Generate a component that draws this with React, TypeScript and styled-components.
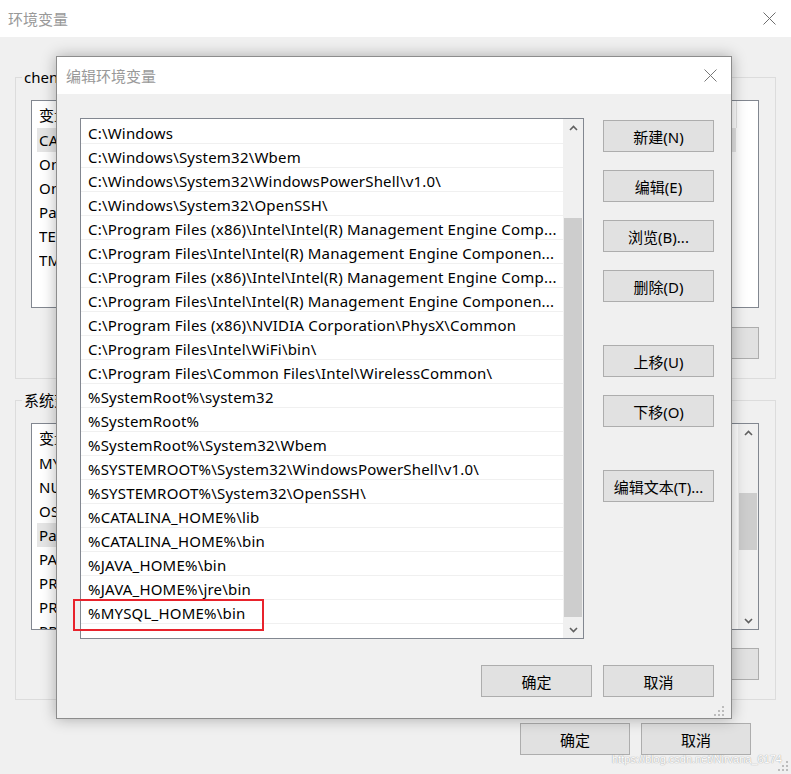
import React from "react";
import styled, { createGlobalStyle } from "styled-components";

const UI_FONT = `"Noto Sans", "Noto Sans CJK SC", sans-serif`;

const GlobalStyle = createGlobalStyle`
  html, body {
    margin: 0;
    padding: 0;
    background: #f0f0f0;
  }
  body {
    font-family: ${UI_FONT};
  }
`;

const pathEntries = [
  "C:\\Windows",
  "C:\\Windows\\System32\\Wbem",
  "C:\\Windows\\System32\\WindowsPowerShell\\v1.0\\",
  "C:\\Windows\\System32\\OpenSSH\\",
  "C:\\Program Files (x86)\\Intel\\Intel(R) Management Engine Comp...",
  "C:\\Program Files\\Intel\\Intel(R) Management Engine Componen...",
  "C:\\Program Files (x86)\\Intel\\Intel(R) Management Engine Comp...",
  "C:\\Program Files\\Intel\\Intel(R) Management Engine Componen...",
  "C:\\Program Files (x86)\\NVIDIA Corporation\\PhysX\\Common",
  "C:\\Program Files\\Intel\\WiFi\\bin\\",
  "C:\\Program Files\\Common Files\\Intel\\WirelessCommon\\",
  "%SystemRoot%\\system32",
  "%SystemRoot%",
  "%SystemRoot%\\System32\\Wbem",
  "%SYSTEMROOT%\\System32\\WindowsPowerShell\\v1.0\\",
  "%SYSTEMROOT%\\System32\\OpenSSH\\",
  "%CATALINA_HOME%\\lib",
  "%CATALINA_HOME%\\bin",
  "%JAVA_HOME%\\bin",
  "%JAVA_HOME%\\jre\\bin",
  "%MYSQL_HOME%\\bin",
];

const userVars = [
  { name: "CATALINA_HOME", value: "D:\\apache-tomcat-9.0.27" },
  { name: "OneDrive", value: "C:\\Users\\chen\\OneDrive" },
  { name: "OneDriveConsumer", value: "C:\\Users\\chen\\OneDrive" },
  { name: "Path", value: "C:\\Users\\chen\\AppData\\Local\\Microsoft\\WindowsApps;" },
  { name: "TEMP", value: "C:\\Users\\chen\\AppData\\Local\\Temp" },
  { name: "TMP", value: "C:\\Users\\chen\\AppData\\Local\\Temp" },
];

const systemVars = [
  { name: "MYSQL_HOME", value: "D:\\mysql-8.0.18-winx64" },
  { name: "NUMBER_OF_PROCESSORS", value: "8" },
  { name: "OS", value: "Windows_NT" },
  { name: "Path", value: "C:\\Windows\\system32;C:\\Windows;..." },
  { name: "PATHEXT", value: ".COM;.EXE;.BAT;.CMD;.VBS;.VBE;.JS" },
  { name: "PROCESSOR_ARCHITECTURE", value: "AMD64" },
  { name: "PROCESSOR_IDENTIFIER", value: "Intel64 Family 6 Model 142" },
  { name: "PROCESSOR_LEVEL", value: "6" },
];

const Screen = styled.div`
  position: relative;
  width: 791px;
  height: 774px;
  overflow: hidden;
  background: #f0f0f0;
  font-family: ${UI_FONT};
  color: #000;
`;

const BackWindow = styled.div`
  display: flex;
  flex-direction: column;
  height: 100%;
`;

const TitleBar = styled.div<{ $padLeft: number; $padRight: number }>`
  flex: none;
  height: 37px;
  background: #fff;
  display: flex;
  align-items: center;
  justify-content: space-between;
  padding: 0 ${(p) => p.$padRight}px 0 ${(p) => p.$padLeft}px;
`;

const Title = styled.span`
  font-size: 15px;
  line-height: 20px;
  color: #999;
`;

const BackBody = styled.div`
  flex: 1;
  padding: 30px 15px 0;
  display: flex;
  flex-direction: column;
`;

const GroupBox = styled.fieldset<{ $gapTop?: number }>`
  margin: ${(p) => p.$gapTop ?? 0}px 0 0;
  padding: 0 16px 19px 15px;
  border: 1px solid #dcdcdc;
  min-width: 0;
`;

const Legend = styled.legend`
  margin-left: -9px;
  padding: 0 2px;
  font-size: 15px;
  line-height: 20px;
`;

const VarList = styled.div<{ $height: number }>`
  margin-top: 13px;
  height: ${(p) => p.$height}px;
  box-sizing: border-box;
  border: 1px solid #828790;
  background: #fff;
  display: flex;
  overflow: hidden;
`;

const VarColumns = styled.div`
  flex: 1;
  min-width: 0;
  margin-right: 1px;
`;

const VarHeader = styled.div`
  height: 27px;
  display: flex;
  font-size: 15px;
  margin-right: 20px;
`;

const HeaderCell = styled.div<{ $width?: number }>`
  ${(p) => (p.$width ? `width: ${p.$width}px;` : "flex: 1;")}
  box-sizing: border-box;
  padding-left: 7px;
  display: flex;
  align-items: center;
  border-right: 1px solid #e5e5e5;
`;

const VarRow = styled.div<{ $selected?: boolean }>`
  height: 24px;
  margin: 0 21px 0 5px;
  padding-left: 2px;
  display: flex;
  align-items: center;
  font-size: 15px;
  letter-spacing: 0.2px;
  white-space: nowrap;
  background: ${(p) => (p.$selected ? "#e5e5e5" : "transparent")};
`;

const VarName = styled.span`
  width: 193px;
  overflow: hidden;
`;

const ButtonRow = styled.div<{ $gapTop: number; $padRight?: number }>`
  margin-top: ${(p) => p.$gapTop}px;
  padding-right: ${(p) => p.$padRight ?? 0}px;
  display: flex;
  justify-content: flex-end;
  gap: 11px;
`;

const Button = styled.button<{ $width?: number; $gapTop?: number }>`
  flex: none;
  width: ${(p) => p.$width ?? 111}px;
  height: 32px;
  margin-top: ${(p) => p.$gapTop ?? 0}px;
  box-sizing: border-box;
  border: 1px solid #adadad;
  background: #e1e1e1;
  font-family: ${UI_FONT};
  font-size: 15px;
  color: #000;
  padding: 0;
`;

const Scrollbar = styled.div`
  flex: none;
  width: 20px;
  background: #f0f0f0;
  display: flex;
  flex-direction: column;
`;

const ArrowBox = styled.div`
  height: 17px;
  display: flex;
  align-items: center;
  justify-content: center;
`;

const Thumb = styled.div<{ $top: number; $height: number }>`
  margin: ${(p) => p.$top}px 1px 0;
  height: ${(p) => p.$height}px;
  background: #cdcdcd;
`;

const TrackRest = styled.div`
  flex: 1;
`;

const Dialog = styled.div`
  position: absolute;
  left: 56px;
  top: 56px;
  width: 676px;
  height: 663px;
  box-sizing: border-box;
  border: 1px solid #8c8c8c;
  background: #f0f0f0;
  box-shadow: 0 0 14px rgba(0, 0, 0, 0.3);
  display: flex;
  flex-direction: column;
`;

const DialogBody = styled.div`
  flex: 1;
  padding: 24px 17px 0 23px;
  display: flex;
  flex-direction: column;
`;

const MainRow = styled.div`
  display: flex;
  gap: 19px;
`;

const PathList = styled.div`
  flex: none;
  width: 504px;
  height: 521px;
  box-sizing: border-box;
  border: 1px solid #828790;
  background: #fff;
  display: flex;
  overflow: hidden;
`;

const PathRows = styled.div`
  flex: 1;
  min-width: 0;
  padding-top: 1px;
`;

const PathRow = styled.div`
  height: 24px;
  box-sizing: border-box;
  border-bottom: 1px solid #f0f0f0;
  padding: 2px 0 0 7px;
  display: flex;
  align-items: center;
  font-size: 15px;
  letter-spacing: 0.2px;
  white-space: nowrap;
  overflow: hidden;
`;

const SideButtons = styled.div`
  padding-top: 2px;
  display: flex;
  flex-direction: column;
  gap: 18px;
`;

const Footer = styled.div`
  margin-top: 26px;
  display: flex;
  justify-content: flex-end;
  gap: 11px;
`;

const Grip = styled.svg<{ $right: number; $bottom: number }>`
  position: absolute;
  right: ${(p) => p.$right}px;
  bottom: ${(p) => p.$bottom}px;
`;

const Highlight = styled.div`
  position: absolute;
  left: 73px;
  top: 599px;
  width: 191px;
  height: 32px;
  box-sizing: border-box;
  border: 2px solid #e8232c;
`;

const Watermark = styled.div`
  position: absolute;
  right: 9px;
  bottom: 9px;
  font-family: "Liberation Sans", sans-serif;
  font-size: 11px;
  color: #fff;
  text-shadow: 0 0 1px #a8a8a8, 0 0 1px #a8a8a8;
  white-space: nowrap;
`;

const CloseIcon = ({ color }: { color: string }) => (
  <svg width="13" height="13" viewBox="0 0 13 13">
    <path d="M0.5 0.5 L12.5 12.5 M12.5 0.5 L0.5 12.5" stroke={color} strokeWidth="1" fill="none" />
  </svg>
);

const Chevron = ({ down }: { down?: boolean }) => (
  <svg width="9" height="6" viewBox="0 0 9 6">
    <path
      d={down ? "M1 1 L4.5 4.5 L8 1" : "M1 5 L4.5 1.5 L8 5"}
      stroke="#606060"
      strokeWidth="1.6"
      fill="none"
    />
  </svg>
);

const GripDots = ({ right, bottom }: { right: number; bottom: number }) => (
  <Grip $right={right} $bottom={bottom} width="10" height="10" viewBox="0 0 10 10">
    <g fill="#bcbcbc">
      <rect x="8" y="0" width="2" height="2" />
      <rect x="4" y="4" width="2" height="2" />
      <rect x="8" y="4" width="2" height="2" />
      <rect x="0" y="8" width="2" height="2" />
      <rect x="4" y="8" width="2" height="2" />
      <rect x="8" y="8" width="2" height="2" />
    </g>
  </Grip>
);

interface ScrollProps {
  thumbTop: number;
  thumbHeight: number;
}

const ScrollColumn = ({ thumbTop, thumbHeight }: ScrollProps) => (
  <Scrollbar>
    <ArrowBox>
      <Chevron />
    </ArrowBox>
    <Thumb $top={thumbTop} $height={thumbHeight} />
    <TrackRest />
    <ArrowBox>
      <Chevron down />
    </ArrowBox>
  </Scrollbar>
);

interface VarTableProps {
  rows: { name: string; value: string }[];
  selected: number;
  height: number;
  scroll?: ScrollProps;
}

const VarTable = ({ rows, selected, height, scroll }: VarTableProps) => (
  <VarList $height={height}>
    <VarColumns>
      <VarHeader>
        <HeaderCell $width={200}>变量</HeaderCell>
        <HeaderCell>值</HeaderCell>
      </VarHeader>
      {rows.map((r, i) => (
        <VarRow key={r.name + i} $selected={i === selected}>
          <VarName>{r.name}</VarName>
          <span>{r.value}</span>
        </VarRow>
      ))}
    </VarColumns>
    {scroll && <ScrollColumn {...scroll} />}
  </VarList>
);

const App = () => {
  return (
    <Screen>
      <GlobalStyle />
      <BackWindow>
        <TitleBar $padLeft={8} $padRight={15}>
          <Title>环境变量</Title>
          <CloseIcon color="#6e6e6e" />
        </TitleBar>
        <BackBody>
          <GroupBox>
            <Legend>chen 的用户变量(U)</Legend>
            <VarTable rows={userVars} selected={0} height={208} />
            <ButtonRow $gapTop={19}>
              <Button>新建(N)...</Button>
              <Button>编辑(E)...</Button>
              <Button>删除(D)</Button>
            </ButtonRow>
          </GroupBox>
          <GroupBox $gapTop={11}>
            <Legend>系统变量(S)</Legend>
            <VarTable
              rows={systemVars}
              selected={3}
              height={207}
              scroll={{ thumbTop: 52, thumbHeight: 57 }}
            />
            <ButtonRow $gapTop={18}>
              <Button>新建(W)...</Button>
              <Button>编辑(I)...</Button>
              <Button>删除(L)</Button>
            </ButtonRow>
          </GroupBox>
          <ButtonRow $gapTop={23} $padRight={25}>
            <Button $width={110}>确定</Button>
            <Button $width={110}>取消</Button>
          </ButtonRow>
        </BackBody>
      </BackWindow>
      <GripDots right={3} bottom={3} />
      <Watermark>https://blog.csdn.net/Nirvana_6174</Watermark>

      <Dialog>
        <TitleBar $padLeft={9} $padRight={14}>
          <Title>编辑环境变量</Title>
          <CloseIcon color="#777" />
        </TitleBar>
        <DialogBody>
          <MainRow>
            <PathList>
              <PathRows>
                {pathEntries.map((p, i) => (
                  <PathRow key={i}>{p}</PathRow>
                ))}
              </PathRows>
              <ScrollColumn thumbTop={82} thumbHeight={399} />
            </PathList>
            <SideButtons>
              <Button>新建(N)</Button>
              <Button>编辑(E)</Button>
              <Button>浏览(B)...</Button>
              <Button>删除(D)</Button>
              <Button $gapTop={25}>上移(U)</Button>
              <Button>下移(O)</Button>
              <Button $gapTop={25}>编辑文本(T)...</Button>
            </SideButtons>
          </MainRow>
          <Footer>
            <Button>确定</Button>
            <Button>取消</Button>
          </Footer>
        </DialogBody>
        <GripDots right={7} bottom={2} />
      </Dialog>
      <Highlight />
    </Screen>
  );
};

export default App;
